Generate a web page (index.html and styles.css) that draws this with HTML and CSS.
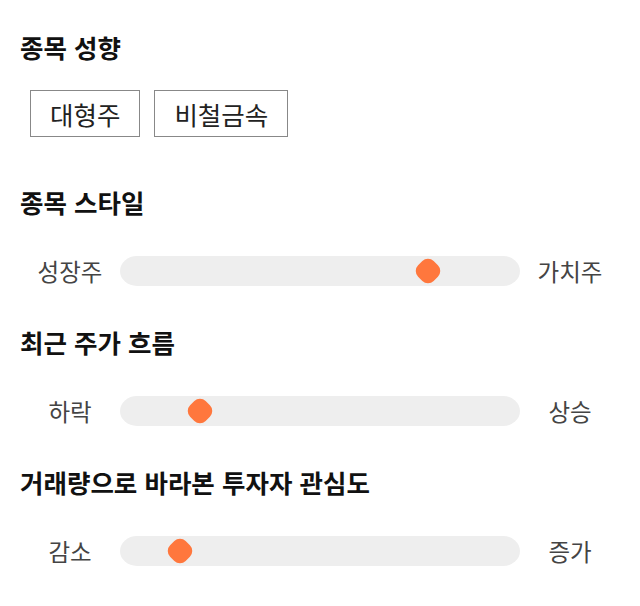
FILE: index.html
```html
<!DOCTYPE html>
<html lang="ko">
  <head>
    <meta charset="UTF-8" />
    <meta name="viewport" content="width=device-width, initial-scale=1.0" />
    <title>종목 분석</title>
    <link rel="stylesheet" href="styles.css">
  </head>
  <body>
    <section class="section">
      <h2 class="section-title">종목 성향</h2>
      <div class="tags">
        <span class="tag">대형주</span>
        <span class="tag">비철금속</span>
      </div>
    </section>

    <section class="section">
      <h2 class="section-title">종목 스타일</h2>
      <div class="scale">
        <span class="scale-label">성장주</span>
        <div class="track"><span class="thumb" style="left: 77%"></span></div>
        <span class="scale-label">가치주</span>
      </div>
    </section>

    <section class="section">
      <h2 class="section-title">최근 주가 흐름</h2>
      <div class="scale">
        <span class="scale-label">하락</span>
        <div class="track"><span class="thumb" style="left: 20%"></span></div>
        <span class="scale-label">상승</span>
      </div>
    </section>

    <section class="section">
      <h2 class="section-title">거래량으로 바라본 투자자 관심도</h2>
      <div class="scale">
        <span class="scale-label">감소</span>
        <div class="track"><span class="thumb" style="left: 15%"></span></div>
        <span class="scale-label">증가</span>
      </div>
    </section>
  </body>
</html>
```

FILE: styles.css
```css
:root {
  --text: #111111;
  --muted: #444444;
  --track: #eeeeee;
  --accent: #ff773d;
}

body {
  margin: 0;
  padding: 31px 20px 0;
  font-family: "Noto Sans CJK KR", "Noto Sans", sans-serif;
  color: var(--text);
  background: #ffffff;
}

.section {
  margin-bottom: 35px;
}

.section:first-child {
  margin-bottom: 49px;
}

.section-title {
  margin: 0 0 33px;
  font-size: 25.5px;
  line-height: 32px;
  font-weight: 700;
}

.section:first-child .section-title {
  margin-bottom: 27px;
}

.tags {
  display: flex;
  gap: 14px;
  padding-left: 10px;
}

.tag {
  display: inline-flex;
  align-items: center;
  height: 45px;
  padding: 0 19px 0 19px;
  border: 1px solid #888888;
  font-size: 25.5px;
  color: #222222;
}

.scale {
  display: grid;
  grid-template-columns: 80px 1fr 80px;
  align-items: center;
  gap: 10px;
  height: 40px;
  padding: 0 10px;
}

.scale-label {
  text-align: center;
  font-size: 23.5px;
  color: var(--muted);
}

.track {
  position: relative;
  height: 30px;
  border-radius: 17px / 15px;
  background: var(--track);
}

.thumb {
  position: absolute;
  top: 50%;
  width: 22px;
  height: 22px;
  border-radius: 8px;
  background: var(--accent);
  transform: translate(-50%, -50%) rotate(45deg);
}
```
